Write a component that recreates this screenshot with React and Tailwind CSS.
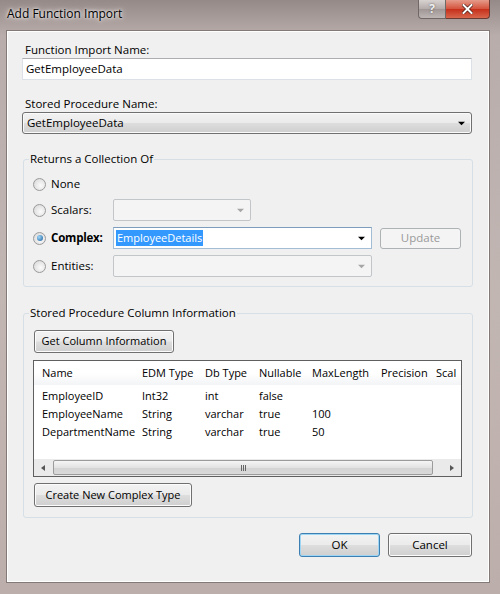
import React from "react";

const Arrow = ({ color = "#000", size = 7 }) => (
  <svg width={size} height={Math.ceil(size / 2) + 1} viewBox="0 0 8 5">
    <path d="M0 0.5h8L4 4.5z" fill={color} />
  </svg>
);

const Radio = ({ checked }) => (
  <span className="flex h-[13px] w-[13px] shrink-0 items-center justify-center rounded-full border border-[#9a9a9a] bg-[radial-gradient(circle_at_60%_60%,#fbfbfb,#d4d4d4)]">
    {checked && (
      <span className="h-[6px] w-[6px] rounded-full bg-[radial-gradient(circle_at_35%_35%,#9fd9fb,#1c5b98)]" />
    )}
  </span>
);

const Btn = ({ children, className = "", disabled, focused }) => (
  <div
    className={`flex items-center justify-center rounded-[3px] border bg-[linear-gradient(180deg,#f3f3f3_0%,#ebebeb_48%,#dddddd_52%,#cfcfcf_100%)] ${
      focused
        ? "border-[#3c7fb1] shadow-[inset_0_0_0_1px_#9fd5f4]"
        : disabled
        ? "border-[#adb2b5] bg-none bg-[#f4f4f4] text-[#9a9a9a]"
        : "border-[#707070] shadow-[inset_0_0_0_1px_#fcfcfc]"
    } ${className}`}
  >
    {children}
  </div>
);

const DisabledCombo = ({ className = "" }) => (
  <div
    className={`flex h-[22px] items-center justify-end rounded-[2px] border border-[#c3c6c9] bg-[#f4f4f4] pr-[6px] ${className}`}
  >
    <Arrow color="#a6a6a6" size={7} />
  </div>
);

// last header is clipped by the list in the original dialog
const columns = ["Name", "EDM Type", "Db Type", "Nullable", "MaxLength", "Precision", "Scal"];

const rows = [
  ["EmployeeID", "Int32", "int", "false", "", "", ""],
  ["EmployeeName", "String", "varchar", "true", "100", "", ""],
  ["DepartmentName", "String", "varchar", "true", "50", "", ""],
];

const grid =
  "grid grid-cols-[101px_63px_54px_53px_69px_55px_32px] [&>*]:pl-[7px] [&>*:first-child]:pl-[8px] [&>*]:whitespace-nowrap";

export default function App() {
  return (
    <div className="flex h-[594px] w-[500px] flex-col bg-[linear-gradient(180deg,#968a88_0%,#b8adab_6%,#c2b6b3_50%,#bcaeab_100%)] font-['Open_Sans',sans-serif] text-[11.5px] text-black">
      {/* title bar */}
      <div className="flex h-[30px] shrink-0 items-start">
        <div className="pl-[7px] pt-[5px] text-[12px] leading-[18px] [text-shadow:0_0_6px_#ffffff,0_0_3px_#ffffff]">
          Add Function Import
        </div>
        <div className="ml-auto mr-[10px] flex">
          <div className="flex h-[19px] w-[28px] items-center justify-center rounded-bl-[4px] border border-t-0 border-[#6f6866] bg-[linear-gradient(180deg,#d8d2d1,#b3abaa_50%,#9f9695_51%,#beb6b5)] text-[12px] font-bold text-[#efefef] [text-shadow:0_0_2px_#555]">
            ?
          </div>
          <div className="flex h-[19px] w-[44px] items-center justify-center rounded-br-[4px] border border-l-0 border-t-0 border-[#6b3a33] bg-[linear-gradient(180deg,#e59b8b,#d4553f_48%,#c5301b_52%,#d8664c)]">
            <svg width="11" height="10" viewBox="0 0 11 10">
              <path d="M1.5 1l8 8M9.5 1l-8 8" stroke="#4a1a12" strokeWidth="3.4" strokeLinecap="square" />
              <path d="M1.5 1l8 8M9.5 1l-8 8" stroke="#ffffff" strokeWidth="2" strokeLinecap="square" />
            </svg>
          </div>
        </div>
      </div>

      {/* client area */}
      <div className="ml-[6px] box-border flex h-[553px] w-[484px] flex-col border border-[#837976] bg-[#f0f0f0] pl-[15px] pr-[17px] pt-[11px] shadow-[inset_0_0_0_1px_#ffffff]">
        <div className="pl-[3px] leading-[16px]">Function Import Name:</div>
        <div className="flex h-[22px] w-[450px] items-center border border-[#dbe1e7] border-t-[#abadb3] bg-white pl-[3px]">
          GetEmployeeData
        </div>

        <div className="mt-[16px] pl-[3px] leading-[16px]">Stored Procedure Name:</div>
        <div className="flex h-[22px] w-[450px] items-center rounded-[3px] border border-[#707070] bg-[linear-gradient(180deg,#f2f2f2_0%,#ebebeb_48%,#dddddd_52%,#cfcfcf_100%)] pl-[4px] pr-[6px] shadow-[inset_0_0_0_1px_#fafafa]">
          <span>GetEmployeeData</span>
          <span className="ml-auto">
            <Arrow />
          </span>
        </div>

        {/* returns group */}
        <fieldset className="ml-[1px] mt-[17px] w-[450px] rounded-[3px] border border-[#d5dfe5] px-0 pb-[9px]">
          <legend className="ml-[5px] px-[1px] leading-[16px]">Returns a Collection Of</legend>
          <div className="flex flex-col pl-[9px] pt-[6px]">
            <div className="flex h-[22px] items-center">
              <Radio />
              <span className="ml-[5px]">None</span>
            </div>
            <div className="mt-[4px] flex h-[22px] items-center">
              <Radio />
              <span className="ml-[5px] w-[62px]">Scalars:</span>
              <DisabledCombo className="w-[138px]" />
            </div>
            <div className="mt-[6px] flex h-[22px] items-center">
              <Radio checked />
              <span className="ml-[5px] w-[62px] font-bold tracking-[-0.2px]">Complex:</span>
              <div className="flex h-[22px] w-[259px] items-center border border-[#a3bdd6] border-t-[#7c9dbd] bg-white pl-[2px] pr-[6px]">
                <span className="bg-[#3399ff] px-[1px] text-[11px] leading-[16px] text-white">EmployeeDetails</span>
                <span className="ml-auto">
                  <Arrow />
                </span>
              </div>
              <Btn disabled className="ml-[8px] h-[21px] w-[81px]">
                Update
              </Btn>
            </div>
            <div className="mt-[6px] flex h-[22px] items-center">
              <Radio />
              <span className="ml-[5px] w-[62px]">Entities:</span>
              <DisabledCombo className="w-[259px]" />
            </div>
          </div>
        </fieldset>

        {/* column info group */}
        <fieldset className="ml-[1px] mt-[18px] w-[450px] rounded-[3px] border border-[#d5dfe5] px-0 pb-[10px]">
          <legend className="ml-[5px] px-[1px] leading-[16px]">Stored Procedure Column Information</legend>
          <div className="flex flex-col pl-[10px] pt-[9px]">
            <Btn className="h-[23px] w-[140px] text-[11px]">Get Column Information</Btn>

            <div className="-ml-[1px] mt-[7px] flex h-[117px] w-[429px] flex-col overflow-hidden border border-[#5f5f5f] bg-white text-[11px]">
              <div className={`${grid} h-[24px] shrink-0 items-center bg-[linear-gradient(180deg,#ffffff_0%,#ffffff_50%,#f3f4f6_100%)]`}>
                {columns.map((c) => (
                  <div key={c}>{c}</div>
                ))}
              </div>
              <div className="flex-1 pt-[2px]">
                {rows.map((r) => (
                  <div key={r[0]} className={`${grid} h-[18px] items-center`}>
                    {r.map((v, i) => (
                      <div key={i}>{v}</div>
                    ))}
                  </div>
                ))}
              </div>
              {/* horizontal scrollbar */}
              <div className="flex h-[17px] shrink-0 items-center bg-[#eaeaea] px-[1px]">
                <div className="flex h-[15px] w-[16px] items-center justify-center">
                  <svg width="4" height="6" viewBox="0 0 4 6">
                    <path d="M4 0v6L0 3z" fill="#555" />
                  </svg>
                </div>
                <div className="ml-[2px] flex h-[15px] w-[380px] items-center justify-center gap-[1px] rounded-[2px] border border-[#9b9b9b] bg-[linear-gradient(180deg,#f5f5f5,#e3e3e3_50%,#d3d3d3_51%,#d9d9d9)]">
                  <span className="h-[6px] w-[1px] bg-[#666]" />
                  <span className="h-[6px] w-[1px] bg-[#666]" />
                  <span className="h-[6px] w-[1px] bg-[#666]" />
                </div>
                <div className="ml-auto flex h-[15px] w-[16px] items-center justify-center">
                  <svg width="4" height="6" viewBox="0 0 4 6">
                    <path d="M0 0v6L4 3z" fill="#555" />
                  </svg>
                </div>
              </div>
            </div>

            <Btn className="mt-[6px] h-[24px] w-[158px] text-[11px]">Create New Complex Type</Btn>
          </div>
        </fieldset>

        {/* dialog buttons */}
        <div className="mt-[15px] flex w-[450px] justify-end gap-[8px]">
          <Btn focused className="h-[24px] w-[81px]">
            OK
          </Btn>
          <Btn className="h-[24px] w-[84px]">Cancel</Btn>
        </div>
      </div>
    </div>
  );
}
